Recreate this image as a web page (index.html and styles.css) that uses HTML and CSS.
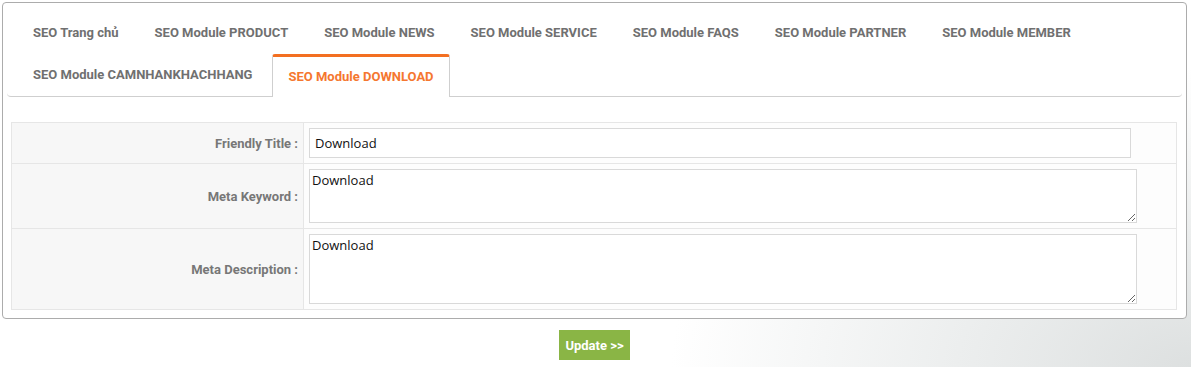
FILE: index.html
```html
<!DOCTYPE html>
<html lang="vi">
<head>
    <meta charset="UTF-8">
    <meta name="viewport" content="width=device-width, initial-scale=1.0">
    <title>SEO Module</title>
    <link rel="stylesheet" href="styles.css">
</head>
<body>

    <div class="panel">
        <!-- Module tabs -->
        <ul class="tabs">
            <li class="tab">SEO Trang chủ</li>
            <li class="tab">SEO Module PRODUCT</li>
            <li class="tab">SEO Module NEWS</li>
            <li class="tab">SEO Module SERVICE</li>
            <li class="tab">SEO Module FAQS</li>
            <li class="tab">SEO Module PARTNER</li>
            <li class="tab">SEO Module MEMBER</li>
            <li class="tab">SEO Module CAMNHANKHACHHANG</li>
            <li class="tab active">SEO Module DOWNLOAD</li>
        </ul>

        <!-- SEO form -->
        <table class="seo-table">
            <tr class="row-title">
                <td class="label">Friendly Title :</td>
                <td class="field"><input type="text" class="text-input" value="Download"></td>
            </tr>
            <tr class="row-keyword">
                <td class="label">Meta Keyword :</td>
                <td class="field"><textarea class="text-area keyword">Download</textarea></td>
            </tr>
            <tr class="row-desc">
                <td class="label">Meta Description :</td>
                <td class="field"><textarea class="text-area desc">Download</textarea></td>
            </tr>
        </table>
    </div>

    <div class="actions">
        <button class="update-button">Update &gt;&gt;</button>
    </div>

</body>
</html>
```

FILE: styles.css
```css
/* Page background with the grey fade in the bottom right */
body {
    margin: 0;
    padding: 2px 4px 0 2px;
    height: 365px;
    font-family: Roboto, Arial, sans-serif;
    background: radial-gradient(ellipse 520px 300px at 100% 100%, #dde0e0 0%, #eceeee 45%, #ffffff 100%);
    background-color: #fff;
}

/* Main white box */
.panel {
    background-color: #fff;
    border: 1px solid #acacac;
    border-radius: 4px;
    padding: 9px 0 8px 0;
}

/* Tabs */
.tabs {
    list-style: none;
    margin: 0 4px;
    padding: 0 0 0 10px;
    display: flex;
    flex-wrap: wrap;
    column-gap: 4px;
    border-bottom: 1px solid #cfcfcf;
    border-radius: 0 0 4px 4px;
}

.tab {
    height: 42px;
    line-height: 42px;
    padding: 0 16px;
    font-size: 13px;
    font-weight: bold;
    color: #707070;
    box-sizing: border-box;
}

.tab.active {
    color: #f5772f;
    background-color: #fff;
    border-top: 3px solid #f36f21;
    border-left: 1px solid #cfcfcf;
    border-right: 1px solid #cfcfcf;
    border-radius: 3px 3px 0 0;
    padding: 0 15px;
    line-height: 40px;
    height: 43px;
    margin-bottom: -1px;
}

/* Form table */
.seo-table {
    margin: 25px 9px 0 8px;
    width: calc(100% - 17px);
    border-collapse: collapse;
}

.seo-table td {
    border: 1px solid #e6e6e6;
    padding: 5px;
}

.label {
    width: 281px;
    background-color: #f7f7f7;
    text-align: right;
    font-size: 13px;
    font-weight: bold;
    color: #777;
    vertical-align: middle;
}

.field {
    background-color: #fdfdfd;
}

.text-input,
.text-area {
    display: block;
    box-sizing: border-box;
    margin: 0;
    border: 1px solid #d9d9d9;
    background-color: #fff;
    font-family: "Open Sans", Arial, sans-serif;
    font-size: 13px;
    color: #111;
}

.text-input {
    width: 822px;
    height: 30px;
    padding: 0 5px;
}

.text-area {
    width: 828px;
    padding: 1px 2px;
    resize: vertical;
}

.keyword {
    height: 54px;
}

.desc {
    height: 70px;
}

/* Update button */
.actions {
    display: flex;
    justify-content: center;
    padding-top: 11px;
}

.update-button {
    height: 30px;
    padding: 0 6px;
    border: none;
    background-color: #8ab545;
    color: #fff;
    font-family: Roboto, Arial, sans-serif;
    font-size: 13px;
    font-weight: bold;
}
```
